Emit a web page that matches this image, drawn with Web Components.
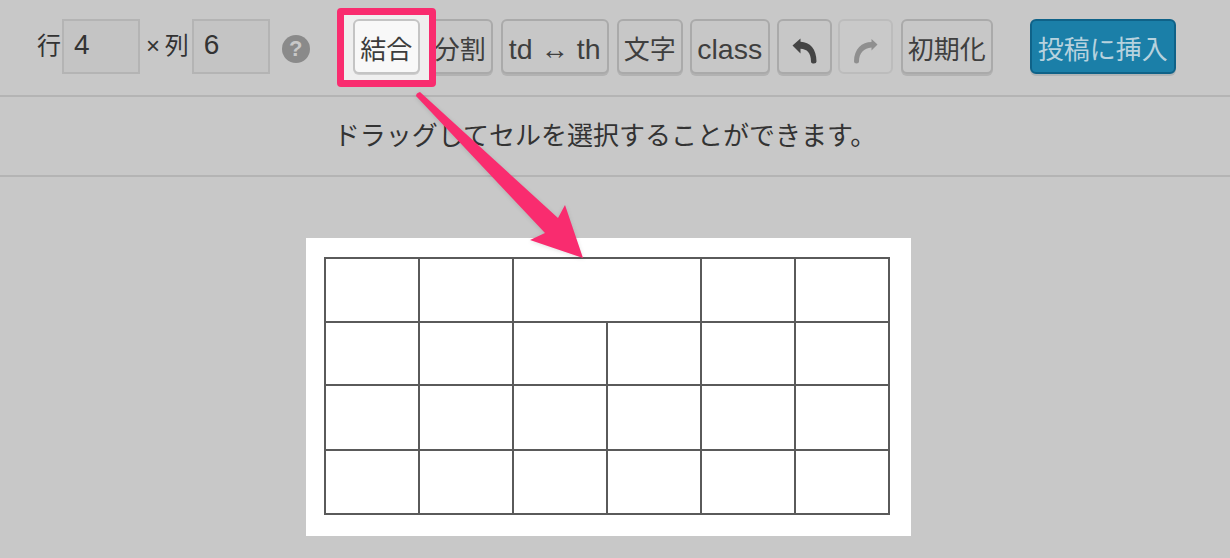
<!DOCTYPE html>
<html lang="ja">
<head>
<meta charset="utf-8">
<title>table</title>
<style>
    html, body { margin: 0; padding: 0; background: #c8c8c8; }
    body { width: 1230px; height: 558px; overflow: hidden; position: relative; font-family: "Liberation Sans", "Noto Sans CJK JP", sans-serif; color: #333; }
</style>
</head>
<body>
<table-toolbar>
    <text-label>行</text-label>
    <num-input value="4"></num-input>
    <text-label class="times">× 列</text-label>
    <num-input value="6"></num-input>
    <help-mark></help-mark>
    <tool-button style="--width: 67px; margin-left: 43px" active>結合</tool-button>
    <tool-button style="--width: 66px; margin-left: 7px">分割</tool-button>
    <tool-button style="--width: 108px; margin-left: 8px" latin>td ↔ th</tool-button>
    <tool-button style="--width: 66px; margin-left: 8px">文字</tool-button>
    <tool-button style="--width: 80px; margin-left: 7px" latin>class</tool-button>
    <tool-button style="--width: 55px; margin-left: 7px">
        <svg width="30" height="30" viewBox="0 0 30 30" style="margin-top: 6px"><path d="M3.500 9.500 L11.500 2.500 L11.500 5.800 C21 6 27.500 13 27.500 25.500 Q27.500 27.500 25 27.500 Q22 27.500 22 25.500 C22 17 18 13 11.500 12.800 L11.500 17.500 Z" fill="#444"/></svg>
    </tool-button>
    <tool-button style="--width: 55px; margin-left: 6px" disabled>
        <svg width="30" height="30" viewBox="0 0 30 30" style="margin-top: 6px"><path d="M27.500 8.500 L21.500 3 L21.500 6 C12 6 4 13 4 25.500 Q4 27.500 6.500 27.500 Q9 27.500 9 25.500 C9 17 14 12 21.500 11.500 L21.500 14.500 Z" fill="#8f8f8f"/></svg>
    </tool-button>
    <tool-button style="--width: 92px; margin-left: 8px">初期化</tool-button>
    <tool-button style="--width: 146px; margin-left: 37px" primary>投稿に挿入</tool-button>
</table-toolbar>
<hint-bar>ドラッグしてセルを選択することができます。</hint-bar>
<grid-card></grid-card>
<call-out></call-out>

<script>
class TableToolbar extends HTMLElement {
    constructor() {
        super();
        this.attachShadow({ mode: "open" });
        this.shadowRoot.innerHTML = `
        <style>
            :host {
                display: flex;
                align-items: flex-start;
                box-sizing: border-box;
                height: 97px;
                padding: 19px 0 0 37px;
                border-bottom: 2px solid #b4b4b4;
            }
        </style>
        <slot></slot>`;
    }
}

class TextLabel extends HTMLElement {
    constructor() {
        super();
        this.attachShadow({ mode: "open" });
        this.shadowRoot.innerHTML = `
        <style>
            :host {
                display: block;
                font-size: 24px;
                line-height: 54px;
                color: #333;
                white-space: nowrap;
            }
            :host(.times) { margin: 0 2px 0 6px; word-spacing: -2px; }
        </style>
        <slot></slot>`;
    }
}

class NumInput extends HTMLElement {
    constructor() {
        super();
        this.attachShadow({ mode: "open" });
        this.shadowRoot.innerHTML = `
        <style>
            :host {
                display: block;
                box-sizing: border-box;
                width: 78px;
                height: 55px;
                margin-left: 1px;
                border: 2px solid #b4b4b4;
                background: #c4c4c4;
                padding-left: 10px;
                font-size: 28px;
                line-height: 47px;
                color: #333;
            }
        </style>
        <span></span>`;
    }

    connectedCallback() {
        this.shadowRoot.querySelector("span").textContent = this.getAttribute("value") || "";
    }
}

class HelpMark extends HTMLElement {
    constructor() {
        super();
        this.attachShadow({ mode: "open" });
        this.shadowRoot.innerHTML = `
        <style>
            :host {
                display: flex;
                align-items: center;
                justify-content: center;
                width: 28px;
                height: 28px;
                margin: 16px 0 0 12px;
                border-radius: 50%;
                background: #8a8a8a;
                color: #c8c8c8;
                font-size: 22px;
                font-weight: bold;
                line-height: 28px;
            }
        </style>
        ?`;
    }
}

class ToolButton extends HTMLElement {
    constructor() {
        super();
        this.attachShadow({ mode: "open" });
        this.shadowRoot.innerHTML = `
        <style>
            :host {
                display: flex;
                align-items: center;
                justify-content: center;
                box-sizing: border-box;
                width: var(--width, 66px);
                height: 55px;
                padding-top: 2px;
                border: 2px solid #aaaaaa;
                border-radius: 6px;
                background: #c7c7c7;
                box-shadow: 0 2px 0 #b2b2b2;
                color: #3f3f3f;
                font-size: 26px;
                white-space: nowrap;
            }
            :host([latin]) {
                font-size: 28.5px;
                padding-top: 5px;
            }
            :host([active]) {
                position: relative;
                z-index: 3;
                background: #f8f8f8;
                border-color: #c4c4c4;
                box-shadow: 0 1px 0 #cfcfcf;
                color: #3c3c3c;
            }
            :host([disabled]) {
                border-color: #bcbcbc;
                box-shadow: none;
                background: #c9c9c9;
            }
            :host([primary]) {
                background: #1b7fa8;
                border-color: #0f6288;
                box-shadow: 0 2px 0 #b0b4b6;
                color: #b7d2de;
            }
        </style>
        <slot></slot>`;
    }
}

class HintBar extends HTMLElement {
    constructor() {
        super();
        this.attachShadow({ mode: "open" });
        this.shadowRoot.innerHTML = `
        <style>
            :host {
                display: block;
                box-sizing: border-box;
                height: 80px;
                padding: 0 20px 0 0;
                border-bottom: 2px solid #b4b4b4;
                text-align: center;
                font-size: 26px;
                line-height: 78px;
                color: #333;
            }
        </style>
        <slot></slot>`;
    }
}

class GridCard extends HTMLElement {
    constructor() {
        super();
        this.attachShadow({ mode: "open" });
        // first row merges columns three and four
        const rows = [[1, 1, 2, 1, 1], [1, 1, 1, 1, 1, 1], [1, 1, 1, 1, 1, 1], [1, 1, 1, 1, 1, 1]];
        const heights = [64, 63, 65, 64];
        const body = rows.map((row, i) =>
            `<tr style="height:${heights[i]}px">${row.map((span) => `<td colspan="${span}"></td>`).join("")}</tr>`
        ).join("");
        this.shadowRoot.innerHTML = `
        <style>
            :host {
                display: block;
                box-sizing: border-box;
                width: 605px;
                height: 298px;
                margin: 61px 0 0 306px;
                padding: 19px 0 0 18px;
                background: #fff;
            }
            table {
                border-collapse: collapse;
                table-layout: fixed;
                width: 565px;
            }
            col { width: 94px; }
            td {
                border: 2px solid #5a5a5a;
                padding: 0;
            }
        </style>
        <table>
            <colgroup><col><col><col><col><col><col></colgroup>
            <tbody>${body}</tbody>
        </table>`;
    }
}

class CallOut extends HTMLElement {
    constructor() {
        super();
        this.attachShadow({ mode: "open" });
        this.shadowRoot.innerHTML = `
        <style>
            :host {
                position: absolute;
                left: 0;
                top: 0;
                width: 1230px;
                height: 558px;
                pointer-events: none;
                z-index: 2;
            }
            .frame {
                position: absolute;
                left: 337px;
                top: 8px;
                width: 99px;
                height: 79px;
                box-sizing: border-box;
                border: 7px solid #f92c6f;
                border-radius: 4px;
                background: #efefef;
            }
            svg { position: absolute; left: 0; top: 0; filter: drop-shadow(0 1px 2px rgba(0, 0, 0, 0.12)); }
        </style>
        <div class="frame"></div>
        <svg width="1230" height="558" viewBox="0 0 1230 558">
            <path d="M416 96 Q416 93 420 92 L558 218 L565 205 L583 258 L530 240 L545 233 Z" fill="#f92c6f"/>
        </svg>`;
    }
}

customElements.define("table-toolbar", TableToolbar);
customElements.define("text-label", TextLabel);
customElements.define("num-input", NumInput);
customElements.define("help-mark", HelpMark);
customElements.define("tool-button", ToolButton);
customElements.define("hint-bar", HintBar);
customElements.define("grid-card", GridCard);
customElements.define("call-out", CallOut);
</script>
</body>
</html>
